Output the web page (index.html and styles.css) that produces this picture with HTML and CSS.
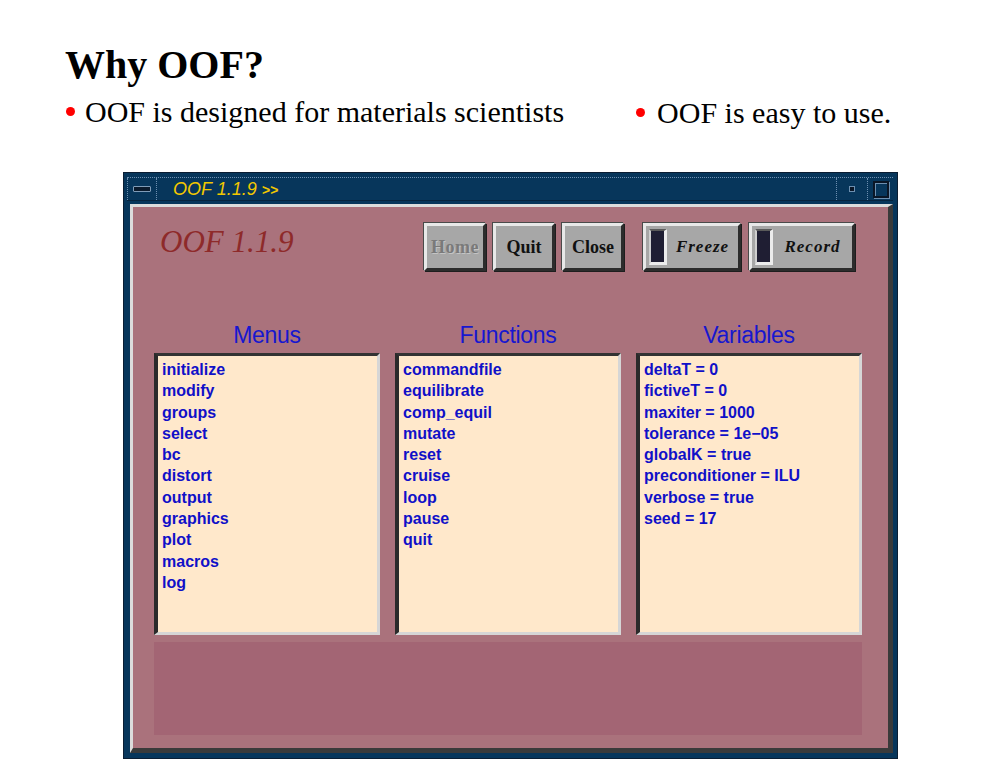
FILE: index.html
```html
<!DOCTYPE html>
<html lang="en">
<head>
  <meta charset="UTF-8">
  <title>Why OOF?</title>
  <link rel="stylesheet" href="styles.css">
</head>
<body>
  <h1>Why OOF?</h1>
  <div class="points">
    <div class="point"><span class="dot"></span>OOF is designed for materials scientists</div>
    <div class="point second"><span class="dot"></span>OOF is easy to use.</div>
  </div>

  <div class="window">
    <div class="titlebar">
      <div class="tb-menu"><span class="tb-bar"></span></div>
      <div class="tb-title">OOF 1.1.9 <span class="tb-more">&gt;&gt;</span></div>
      <div class="tb-min"><span class="tb-dot"></span></div>
      <div class="tb-max"><span class="tb-square"></span></div>
    </div>

    <div class="client">
      <div class="toprow">
        <div class="logo">OOF 1.1.9</div>
        <div class="buttons">
          <div class="btn home">Home</div>
          <div class="btn">Quit</div>
          <div class="btn">Close</div>
          <div class="btn toggle freeze"><span class="lamp"></span><span class="label">Freeze</span></div>
          <div class="btn toggle record"><span class="lamp"></span><span class="label">Record</span></div>
        </div>
      </div>

      <div class="columns">
        <div class="col">
          <div class="col-head">Menus</div>
          <div class="list">
            <div>initialize</div>
            <div>modify</div>
            <div>groups</div>
            <div>select</div>
            <div>bc</div>
            <div>distort</div>
            <div>output</div>
            <div>graphics</div>
            <div>plot</div>
            <div>macros</div>
            <div>log</div>
          </div>
        </div>
        <div class="col">
          <div class="col-head">Functions</div>
          <div class="list">
            <div>commandfile</div>
            <div>equilibrate</div>
            <div>comp_equil</div>
            <div>mutate</div>
            <div>reset</div>
            <div>cruise</div>
            <div>loop</div>
            <div>pause</div>
            <div>quit</div>
          </div>
        </div>
        <div class="col">
          <div class="col-head">Variables</div>
          <div class="list">
            <div>deltaT = 0</div>
            <div>fictiveT = 0</div>
            <div>maxiter = 1000</div>
            <div>tolerance = 1e&minus;05</div>
            <div>globalK = true</div>
            <div>preconditioner = ILU</div>
            <div>verbose = true</div>
            <div>seed = 17</div>
          </div>
        </div>
      </div>

      <div class="message"></div>
    </div>
  </div>
</body>
</html>
```

FILE: styles.css
```css
body { margin: 0; background: #fff; font-family: "Liberation Serif", serif; color: #000; }

h1 { margin: 42px 0 0 65px; font-size: 40px; line-height: 46px; font-weight: bold; }

.points { display: flex; gap: 72px; margin: 7px 0 0 66px; font-size: 30px; line-height: 34px; }
.point.second { padding-top: 1px; }
.dot { display: inline-block; width: 9px; height: 9px; border-radius: 50%; background: #f00; vertical-align: 6px; margin-right: 10px; }
.second .dot { margin-right: 12px; }

.window { box-sizing: border-box; width: 775px; height: 587px; margin: 42px 0 0 123px; background: #07365b; border: 1px solid #0b1e33; padding: 4px 4px 5px 6px; }

.titlebar { display: flex; height: 24px; margin-left: -3px; box-sizing: border-box; border-top: 1px dotted #6d8fb0; border-bottom: 1px solid #06243e; font-family: "Liberation Sans", sans-serif; }
.tb-menu { width: 28px; border-right: 1px dotted #6d8fb0; border-left: 1px dotted #6d8fb0; display: flex; align-items: center; justify-content: center; }
.tb-bar { width: 16px; height: 4px; background: #0a1a2c; border: 1px solid #7f9cb8; border-radius: 1px; }
.tb-title { flex: 1; padding-left: 16px; color: #f2c800; font-style: italic; font-size: 18px; line-height: 22px; }
.tb-more { font-size: 14px; font-weight: bold; }
.tb-min { width: 30px; border-left: 1px dotted #6d8fb0; display: flex; align-items: center; justify-content: center; }
.tb-dot { width: 4px; height: 4px; background: #0a1626; border: 1px solid #6d8fb0; }
.tb-max { width: 25px; border-left: 1px dotted #6d8fb0; display: flex; align-items: center; justify-content: center; }
.tb-square { width: 12px; height: 13px; border: 2px solid #0a1626; box-shadow: inset 1px 1px 0 #6d8fb0, 1px 1px 0 #6d8fb0; }

.client { box-sizing: border-box; height: 549px; margin-top: 3px; background: #aa727c; border-style: solid; border-width: 3px 5px 5px 3px; border-color: #dcdcdc #3a3a3a #3a3a3a #dcdcdc; padding: 16px 26px 13px 21px; }

.toprow { display: flex; height: 48px; }
.logo { margin: 2px 0 0 6px; font-family: "Liberation Serif", serif; font-style: italic; font-size: 31px; line-height: 34px; color: #8e2a2a; }
.buttons { display: flex; margin-left: auto; margin-right: 7px; }

.btn { box-sizing: border-box; width: 62px; height: 48px; margin-left: 7px; background: #a7a7a7; border-style: solid; border-width: 3px; border-color: #e8e8e8 #2c2c2c #2c2c2c #e8e8e8; box-shadow: 1px 1px 0 #1e1e1e, -1px -1px 0 #4a4a4a; font-weight: bold; font-size: 18px; line-height: 42px; text-align: center; color: #111; }
.btn.home { color: #7a7a7a; text-shadow: 1px 1px 0 #c4c4c4; letter-spacing: 0.5px; }
.btn.toggle { display: flex; align-items: center; font-style: italic; font-size: 17px; letter-spacing: 1px; }
.btn.freeze { width: 98px; margin-left: 19px; }
.btn.record { width: 106px; margin-left: 8px; }
.lamp { box-sizing: border-box; width: 18px; height: 36px; margin-left: 3px; background: #1f1e33; border-style: solid; border-width: 2px 3px 3px 2px; border-color: #5a5a5a #ececec #ececec #cfcfcf; }
.label { flex: 1; text-align: center; }

.columns { display: grid; grid-template-columns: repeat(3, 226px); gap: 15px; margin-top: 51px; }
.col-head { font-family: "Liberation Sans", sans-serif; font-size: 23px; line-height: 26px; letter-spacing: -0.3px; color: #1717cf; text-align: center; margin-bottom: 5px; }
.list { box-sizing: border-box; height: 282px; background: #ffe8cb; border-style: solid; border-width: 3px 3px 3px 4px; border-color: #333 #d6d6d6 #d6d6d6 #2a2a2a; padding: 3px 0 0 4px; font-family: "Liberation Sans", sans-serif; font-weight: bold; font-size: 16px; line-height: 21.3px; color: #1010c8; }

.message { height: 93px; margin-top: 7px; background: #a36574; }
```
